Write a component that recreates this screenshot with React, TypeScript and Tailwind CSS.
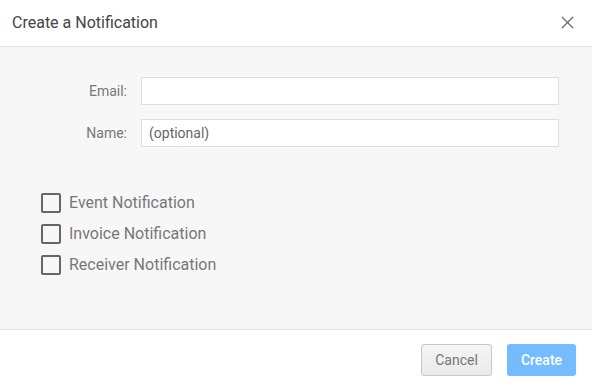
import { X } from "lucide-react";

const fields = [
  { label: "Email:", placeholder: "" },
  { label: "Name:", placeholder: "(optional)" },
];

const options = ["Event Notification", "Invoice Notification", "Receiver Notification"];

export default function App() {
  return (
    <div
      className="w-[592px] h-[388px] bg-white flex flex-col text-[#444]"
      style={{ fontFamily: "Roboto, 'Liberation Sans', sans-serif" }}
    >
      <div className="h-[47px] shrink-0 flex items-center justify-between pl-3 pr-[14px] border-b border-[#e5e5e5]">
        <h1 className="text-[16px] text-[#444] leading-none -mt-[1px]">Create a Notification</h1>
        <X className="w-[21px] h-[21px] text-[#666] -mt-[1px]" strokeWidth={1.4} />
      </div>

      <div className="flex-1 bg-[#f7f7f7] border-b border-[#e5e5e5] pt-[30px]">
        <div className="flex flex-col gap-[14px] pr-[33px]">
          {fields.map((f) => (
            <div key={f.label} className="flex items-center">
              <label className="w-[127px] text-right text-[14px] text-[#777]">{f.label}</label>
              <input
                placeholder={f.placeholder}
                className="ml-[14px] flex-1 h-[28px] bg-white border border-[#dddddd] px-[7px] text-[14px] text-[#444] placeholder:text-[#666] outline-none"
              />
            </div>
          ))}
        </div>

        <div className="mt-[46px] pl-[41px] flex flex-col gap-[11px]">
          {options.map((o) => (
            <label key={o} className="flex items-center h-[20px]">
              <span className="w-[20px] h-[20px] border-2 border-[#666] rounded-[2px] bg-transparent" />
              <span className="ml-[8px] text-[16px] text-[#777]">{o}</span>
            </label>
          ))}
        </div>
      </div>

      <div className="h-[58px] shrink-0 flex items-start justify-end gap-[15px] pt-[14px] pr-[16px]">
        <button className="w-[71px] h-[32px] rounded-[3px] border border-[#c8c8c8] bg-gradient-to-b from-[#f5f5f5] to-[#eaeaea] text-[14px] text-[#777]">
          Cancel
        </button>
        <button className="w-[69px] h-[32px] rounded-[3px] bg-[#74bbff] text-[14px] font-medium text-white">
          Create
        </button>
      </div>
    </div>
  );
}
